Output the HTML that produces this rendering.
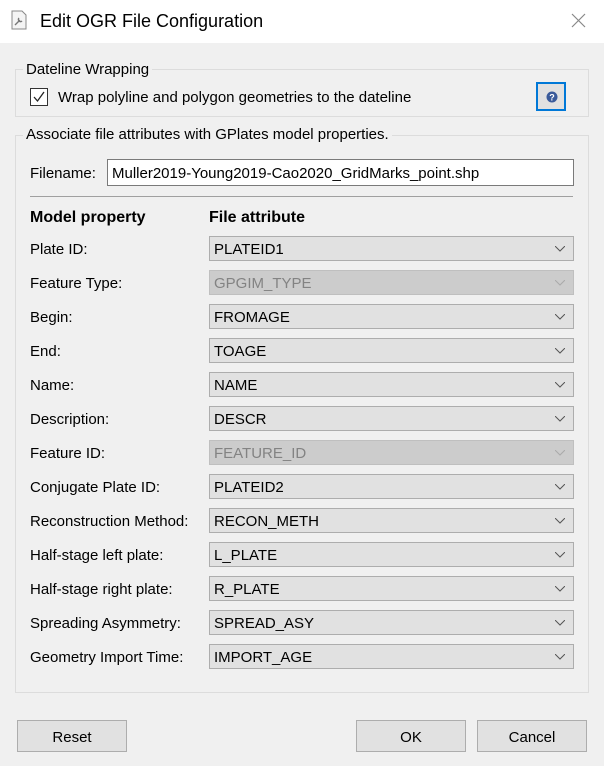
<!DOCTYPE html><html><head><style>
body{margin:0;width:604px;height:766px;background:#f0f0f0;font-family:"Liberation Sans",sans-serif;font-size:15px;color:#000;position:relative;overflow:hidden}
.a{position:absolute;white-space:nowrap}
.title{left:0;top:0;width:604px;height:43px;background:#fff}
.gb{position:absolute;border:1px solid #dcdcdc}
.gt{position:absolute;background:#f0f0f0;padding:0 3px}
.cb{position:absolute;left:209px;width:359px;height:23px;border:1px solid #adadad;background:#e1e1e1;line-height:25px;padding-left:4px;box-sizing:content-box}
.cb.d{background:#cccccc;border-color:#bfbfbf;color:#838383}
.cb svg{position:absolute;right:8px;top:9px}
.lbl{position:absolute;left:30px}
.btn{position:absolute;top:720px;height:30px;border:1px solid #adadad;background:#e1e1e1;text-align:center;line-height:33px}
</style></head><body>
<div class="a title"></div>
<svg class="a" style="left:11px;top:10px" width="16" height="20" viewBox="0 0 16 20"><path d="M1 1h10l4 4v14H1z" fill="#f4f4f4" stroke="#888"/><path d="M4 15l5-5m-1-2a2 2 0 1 0 3 3" stroke="#777" fill="none" stroke-width="1.4"/></svg>
<div class="a" style="left:40px;top:11px;font-size:18px">Edit OGR File Configuration</div>
<svg class="a" style="left:571px;top:13px" width="15" height="15"><path d="M1 1L14 14M14 1L1 14" stroke="#888" stroke-width="1.2"/></svg>

<div class="gb" style="left:15px;top:69px;width:572px;height:46px"></div>
<div class="gt" style="left:23px;top:61px">Dateline Wrapping</div>
<div class="a" style="left:30px;top:88px;width:16px;height:16px;border:1px solid #333;background:#fff"></div>
<svg class="a" style="left:32px;top:90px" width="14" height="14"><path d="M2 7l3.5 4L12 2" stroke="#222" stroke-width="1.3" fill="none"/></svg>
<div class="a" style="left:58px;top:89px">Wrap polyline and polygon geometries to the dateline</div>
<div class="a" style="left:536px;top:82px;width:30px;height:29px;border:2px solid #0078d7;background:#e1e1e1;box-sizing:border-box"></div>
<svg class="a" style="left:546px;top:91px" width="12" height="12"><circle cx="6" cy="6" r="5.5" fill="#3a5a9a"/><text x="6" y="9.5" font-size="9" font-weight="bold" fill="#fff" text-anchor="middle" font-family="Liberation Sans">?</text></svg>

<div class="gb" style="left:15px;top:135px;width:572px;height:556px"></div>
<div class="gt" style="left:23px;top:126px">Associate file attributes with GPlates model properties.</div>
<div class="lbl" style="top:165px">Filename:</div>
<div class="a" style="left:107px;top:159px;width:461px;height:25px;border:1px solid #7a7a7a;background:#fff;line-height:27px;padding-left:4px;box-sizing:content-box">Muller2019-Young2019-Cao2020_GridMarks_point.shp</div>
<div class="a" style="left:30px;top:196px;width:543px;height:1px;background:#a0a0a0"></div>
<div class="lbl" style="top:209px;font-weight:bold;font-size:16px">Model property</div>
<div class="a" style="left:209px;top:209px;font-weight:bold;font-size:16px">File attribute</div>

<div class="lbl" style="top:241px">Plate ID:</div><div class="cb" style="top:236px">PLATEID1<svg width="10" height="6"><path d="M0 0l5 5 5-5" stroke="#555" fill="none"/></svg></div>
<div class="lbl" style="top:275px">Feature Type:</div><div class="cb d" style="top:270px">GPGIM_TYPE<svg width="10" height="6"><path d="M0 0l5 5 5-5" stroke="#aaa" fill="none"/></svg></div>
<div class="lbl" style="top:309px">Begin:</div><div class="cb" style="top:304px">FROMAGE<svg width="10" height="6"><path d="M0 0l5 5 5-5" stroke="#555" fill="none"/></svg></div>
<div class="lbl" style="top:343px">End:</div><div class="cb" style="top:338px">TOAGE<svg width="10" height="6"><path d="M0 0l5 5 5-5" stroke="#555" fill="none"/></svg></div>
<div class="lbl" style="top:377px">Name:</div><div class="cb" style="top:372px">NAME<svg width="10" height="6"><path d="M0 0l5 5 5-5" stroke="#555" fill="none"/></svg></div>
<div class="lbl" style="top:411px">Description:</div><div class="cb" style="top:406px">DESCR<svg width="10" height="6"><path d="M0 0l5 5 5-5" stroke="#555" fill="none"/></svg></div>
<div class="lbl" style="top:445px">Feature ID:</div><div class="cb d" style="top:440px">FEATURE_ID<svg width="10" height="6"><path d="M0 0l5 5 5-5" stroke="#aaa" fill="none"/></svg></div>
<div class="lbl" style="top:479px">Conjugate Plate ID:</div><div class="cb" style="top:474px">PLATEID2<svg width="10" height="6"><path d="M0 0l5 5 5-5" stroke="#555" fill="none"/></svg></div>
<div class="lbl" style="top:513px">Reconstruction Method:</div><div class="cb" style="top:508px">RECON_METH<svg width="10" height="6"><path d="M0 0l5 5 5-5" stroke="#555" fill="none"/></svg></div>
<div class="lbl" style="top:547px">Half-stage left plate:</div><div class="cb" style="top:542px">L_PLATE<svg width="10" height="6"><path d="M0 0l5 5 5-5" stroke="#555" fill="none"/></svg></div>
<div class="lbl" style="top:581px">Half-stage right plate:</div><div class="cb" style="top:576px">R_PLATE<svg width="10" height="6"><path d="M0 0l5 5 5-5" stroke="#555" fill="none"/></svg></div>
<div class="lbl" style="top:615px">Spreading Asymmetry:</div><div class="cb" style="top:610px">SPREAD_ASY<svg width="10" height="6"><path d="M0 0l5 5 5-5" stroke="#555" fill="none"/></svg></div>
<div class="lbl" style="top:649px">Geometry Import Time:</div><div class="cb" style="top:644px">IMPORT_AGE<svg width="10" height="6"><path d="M0 0l5 5 5-5" stroke="#555" fill="none"/></svg></div>

<div class="btn" style="left:17px;width:108px">Reset</div>
<div class="btn" style="left:356px;width:108px">OK</div>
<div class="btn" style="left:477px;width:108px">Cancel</div>
</body></html>
